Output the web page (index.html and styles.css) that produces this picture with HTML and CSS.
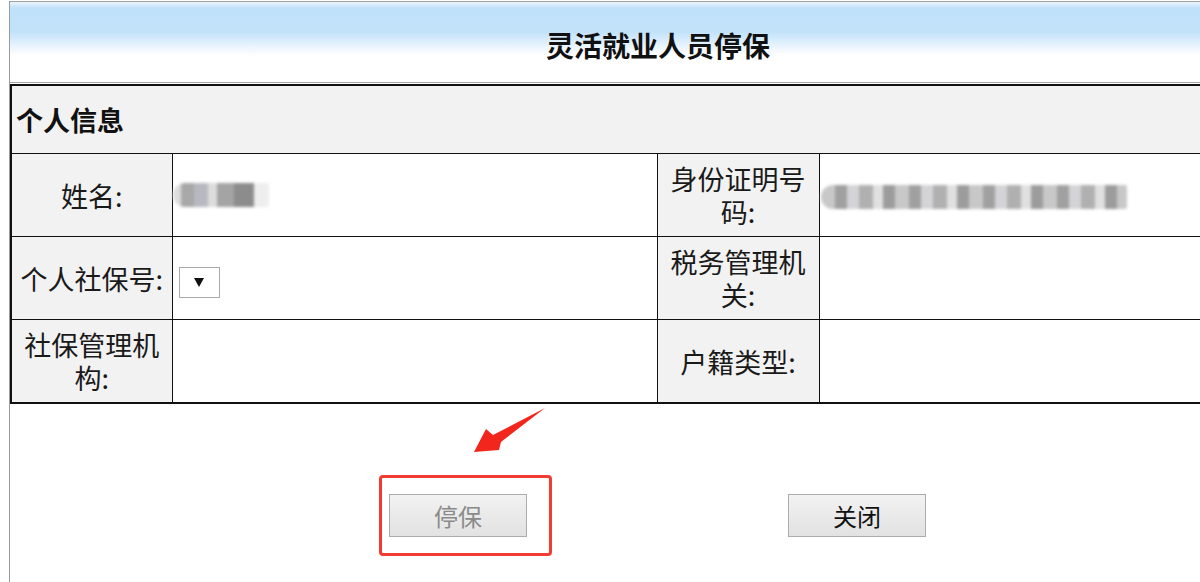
FILE: index.html
```html
<!DOCTYPE html>
<html lang="zh-CN">
<head>
  <meta charset="UTF-8" />
  <title>灵活就业人员停保</title>
  <link rel="stylesheet" href="styles.css">
</head>
<body>
  <div class="frame">
    <div class="title-bar">
      <h1>灵活就业人员停保</h1>
    </div>

    <!-- 个人信息 -->
    <table class="info">
      <colgroup>
        <col class="col-label">
        <col class="col-value">
        <col class="col-label2">
        <col>
      </colgroup>
      <tr>
        <th colspan="4" class="section">个人信息</th>
      </tr>
      <tr>
        <td class="label">姓名:</td>
        <td class="value"><span class="blur blur-name"></span></td>
        <td class="label">身份证明号码:</td>
        <td class="value"><span class="blur blur-id"></span></td>
      </tr>
      <tr>
        <td class="label">个人社保号:</td>
        <td class="value">
          <span class="select-box">
            <svg width="10" height="9" viewBox="0 0 10 9"><path d="M0 0 L10 0 L5 9 Z" fill="#111"/></svg>
          </span>
        </td>
        <td class="label">税务管理机关:</td>
        <td class="value"></td>
      </tr>
      <tr>
        <td class="label">社保管理机构:</td>
        <td class="value"></td>
        <td class="label">户籍类型:</td>
        <td class="value"></td>
      </tr>
    </table>

    <div class="actions">
      <svg class="arrow" width="80" height="52" viewBox="0 0 80 52">
        <path d="M75 3 L23 30 L16 24 L4 47 L29 45 L31 37 Z" fill="#f2261c"/>
      </svg>
      <span class="mark">
        <button class="btn" disabled>停保</button>
      </span>
      <button class="btn">关闭</button>
    </div>
  </div>
</body>
</html>
```

FILE: styles.css
```css
html, body {
  margin: 0;
  padding: 0;
  background: #fff;
  overflow: hidden;
}

body {
  font-family: "Noto Sans CJK SC", "Noto Sans", sans-serif;
  color: #111;
  padding-top: 1px;
  height: 581px;
}

.frame {
  margin-left: 9px;
  width: 1191px;
  height: 100%;
  border-left: 1px solid #9a9a9a;
}

.title-bar {
  height: 80px;
  border-top: 1px solid #a0a0a0;
  border-bottom: 1px solid #a8a8a8;
  margin-bottom: 1px;
  padding-left: 105px;
  background: linear-gradient(#eaf5fd 0, #c0e1fa 6px, #c2e2fa 30px, #eef6fe 46px, #fff 54px);
  display: flex;
  align-items: center;
  justify-content: center;
}

.title-bar h1 {
  margin: 0;
  padding-top: 6px;
  font-size: 28px;
  font-weight: bold;
  color: #111;
}

.info {
  width: 1191px;
  table-layout: fixed;
  border-collapse: collapse;
  border: 2px solid #111;
  border-right: none;
}

.col-label { width: 161px; }
.col-value { width: 485px; }
.col-label2 { width: 162px; }

.info th,
.info td {
  border: 1px solid #111;
  padding: 0 4px;
}

.info tr > :last-child {
  border-right: none;
}

.section {
  height: 67px;
  background: #f2f2f2;
  text-align: left;
  font-size: 27px;
  font-weight: bold;
  padding-left: 6px;
  padding-top: 2px;
}

.label {
  height: 82px;
  background: #f2f2f2;
  text-align: center;
  font-size: 27px;
  line-height: 33px;
  color: #1a1a1a;
}

.value {
  background: #fff;
  vertical-align: middle;
}

.blur {
  display: block;
  height: 24px;
  border-radius: 12px 2px 2px 12px;
  filter: blur(1.6px);
}

.blur-name {
  width: 96px;
  margin-left: -4px;
  background: linear-gradient(to right, #ddd 0 8%, #a8a8a8 8% 22%, #b8b8c0 22% 36%, #ddd 36% 46%, #a4a4a4 46% 64%, #8c8c8c 64% 84%, #eee 84% 100%);
}

.blur-id {
  width: 306px;
  margin-left: -3px;
  margin-top: 4px;
  background: repeating-linear-gradient(to right, #c8c8c8 0 14px, #a0a0a0 14px 26px, #d4d4d8 26px 38px, #b0b0b0 38px 52px, #e0e0e0 52px 62px, #9c9c9c 62px 74px);
}

.select-box {
  display: inline-flex;
  align-items: center;
  justify-content: center;
  width: 39px;
  height: 29px;
  margin-left: 2px;
  margin-top: 8px;
  border: 1px solid #aaa;
  background: #fff;
}

.actions {
  position: relative;
  display: flex;
  align-items: flex-start;
  gap: 261px;
  padding: 90px 0 0 379px;
}

.arrow {
  position: absolute;
  left: 460px;
  top: 1px;
}

.mark {
  position: relative;
  display: inline-block;
}

.mark::after {
  content: "";
  position: absolute;
  left: -10px;
  top: -19px;
  right: -25px;
  bottom: -19px;
  border: 3px solid #f03c32;
  border-radius: 4px;
}

.btn {
  display: block;
  width: 138px;
  height: 43px;
  border: 1px solid #acacac;
  background: linear-gradient(#f2f2f2, #e2e2e2);
  font-family: "Noto Sans CJK SC", sans-serif;
  font-size: 24px;
  color: #111;
  padding: 0;
}

.btn:disabled {
  color: #8a8a8a;
}
```
